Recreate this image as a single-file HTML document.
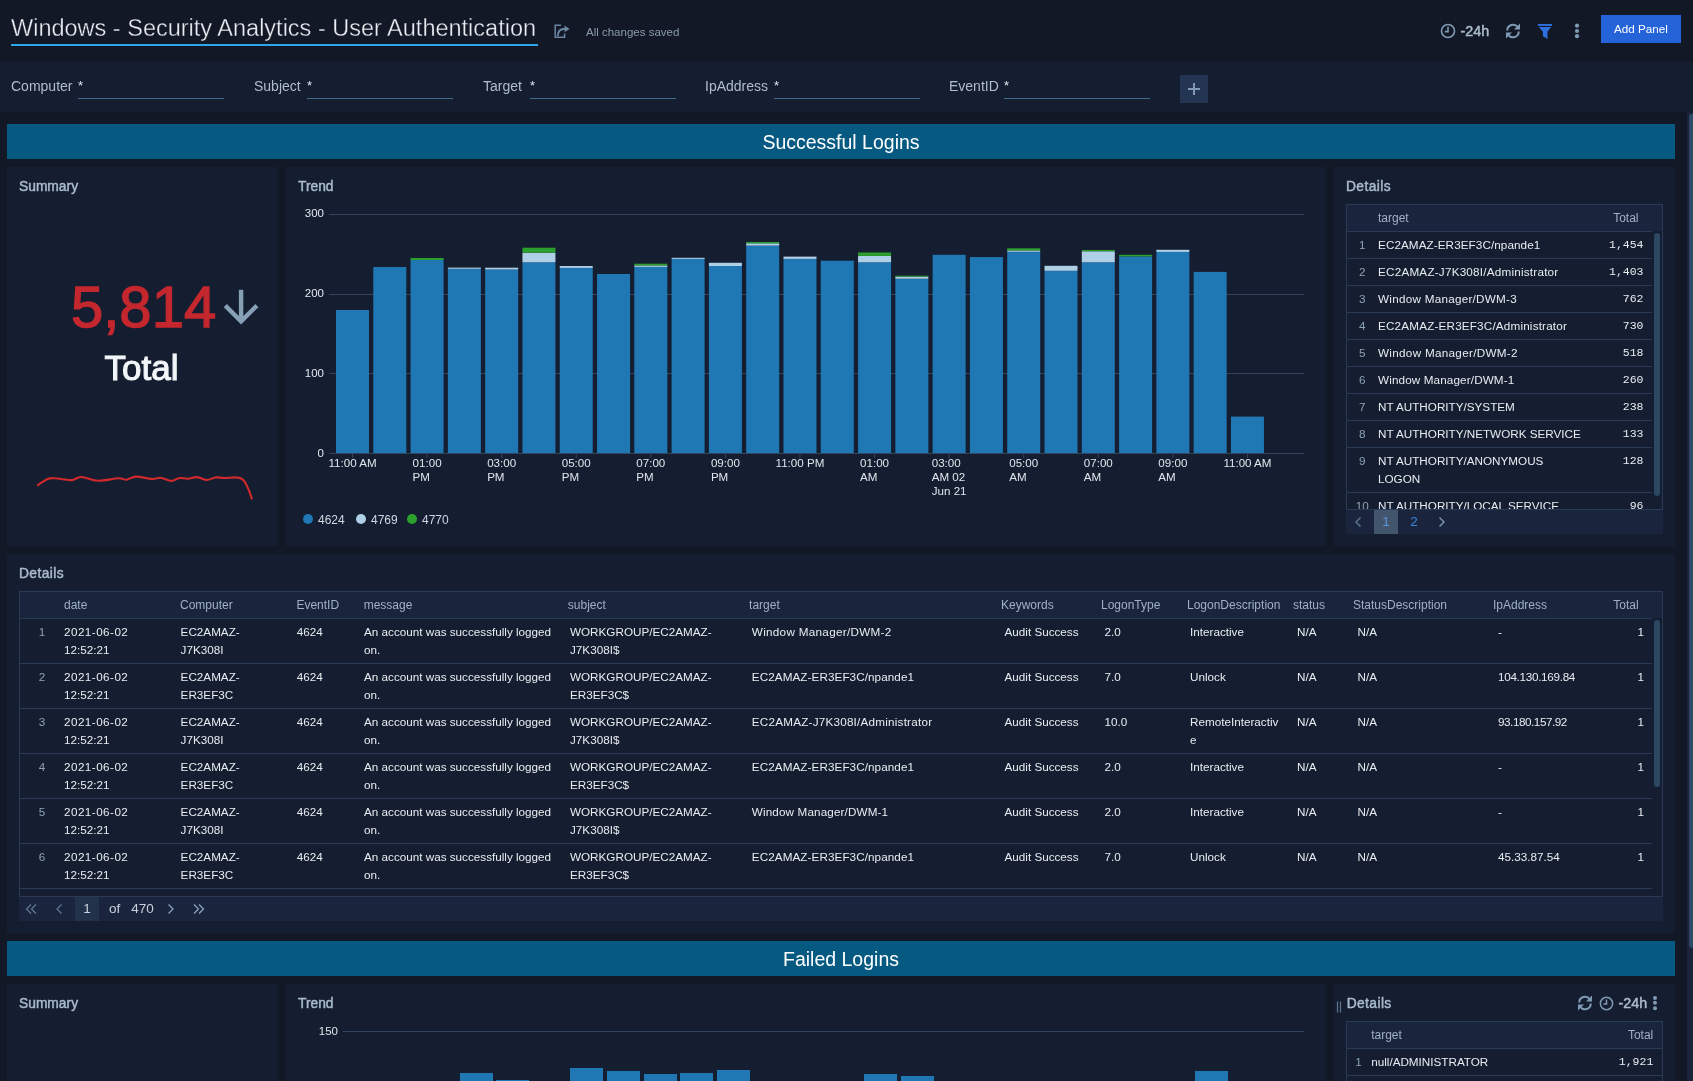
<!DOCTYPE html><html><head><meta charset="utf-8"><style>
*{box-sizing:border-box;margin:0;padding:0}
html,body{width:1693px;height:1081px;overflow:hidden;background:#121826;font-family:"Liberation Sans",sans-serif;color:#e6eaef}
.a{position:absolute;white-space:nowrap}
.p{position:absolute;background:#151e30}
.pt{position:absolute;font-size:13.3px;font-weight:700;color:#a9bccd}
.sec{position:absolute;left:7px;width:1668px;height:35px;background:#065a82;color:#fff;font-size:19.5px;text-align:center;line-height:37px}
.bd{position:absolute;background:#293a56}
.hd{position:absolute;font-size:12.3px;color:#9fb1c4;white-space:nowrap}
.c{position:absolute;font-size:11.8px;color:#e8ecf1;line-height:18px;white-space:nowrap}
.n{position:absolute;font-size:11.8px;color:#8ea3b5;white-space:nowrap}
.m{position:absolute;font-family:"Liberation Mono",monospace;font-size:12px;color:#e8ecf1;white-space:nowrap}
</style></head><body><div id="w" style="position:absolute;left:0;top:0;width:1693px;height:1081px;will-change:transform"><div class="a" style="left:11px;top:16.5px;font-size:23.5px;color:#e9edf2;font-weight:400;line-height:1;-webkit-text-stroke:0.35px #121826">Windows - Security Analytics - User Authentication</div>
<div class="a" style="left:11px;top:44px;width:527px;height:2px;background:#2ea4ea;"></div>
<svg class="a" style="left:552px;top:22px" width="20" height="18" viewBox="0 0 20 18">
  <path d="M9 3.2H3.2v12h9.4v-3.6" fill="none" stroke="#6b86a0" stroke-width="1.5"/>
  <path d="M5.8 14c0-5 2.5-7.2 7.4-7.2" fill="none" stroke="#6b86a0" stroke-width="1.9"/>
  <path d="M12.6 3.6l5 3.3-5 3.3z" fill="#6b86a0"/>
</svg>
<div class="a" style="left:586px;top:26.5px;font-size:11.5px;color:#8a9bab;font-weight:400;line-height:1;">All changes saved</div>
<svg class="a" style="left:1439px;top:22px" width="18" height="18" viewBox="0 0 18 18">
  <circle cx="9" cy="9" r="6.5" fill="none" stroke="#7f9ab2" stroke-width="1.6"/>
  <path d="M9 4.8V9.6H5.8" fill="none" stroke="#7f9ab2" stroke-width="1.6"/>
</svg>
<div class="a" style="left:1460.5px;top:24px;font-size:14.3px;color:#aabbca;font-weight:400;line-height:1;-webkit-text-stroke:0.5px #aabbca">-24h</div>
<svg class="a" style="left:1504px;top:22px" width="18" height="18" viewBox="0 0 18 18">
  <path d="M3.2 8.5a5.8 5.8 0 0 1 10.6-3.2" fill="none" stroke="#7f9ab2" stroke-width="2"/>
  <path d="M16 1.5v6h-6z" fill="#7f9ab2"/>
  <path d="M14.8 9.5a5.8 5.8 0 0 1-10.6 3.2" fill="none" stroke="#7f9ab2" stroke-width="2"/>
  <path d="M2 16.5v-6h6z" fill="#7f9ab2"/>
</svg>
<svg class="a" style="left:1537px;top:23px" width="16" height="16" viewBox="0 0 16 16">
  <rect x="0.9" y="1" width="14.2" height="1.9" fill="#2d6fdc"/>
  <path d="M1.8 4.1H14.1L10.5 8.8V15.9L5.9 13.2V8.8Z" fill="#2d6fdc"/>
</svg>
<svg class="a" style="left:1573px;top:22px" width="8" height="18" viewBox="0 0 8 18">
  <circle cx="4" cy="3.7" r="2.1" fill="#7f9ab2"/><circle cx="4" cy="9" r="2.1" fill="#7f9ab2"/><circle cx="4" cy="14.2" r="2.1" fill="#7f9ab2"/>
</svg>
<div class="a" style="left:1601px;top:15px;width:80px;height:28px;background:#2563d9;color:#fff;font-size:11.7px;text-align:center;line-height:28px">Add Panel</div>
<div class="a" style="left:0px;top:62px;width:1693px;height:50px;background:#151e30;"></div>
<div class="a" style="left:11px;top:79px;font-size:14px;color:#aebdcb;font-weight:400;line-height:1;">Computer</div>
<div class="a" style="left:78px;top:79px;font-size:13px;color:#dfe6ee;font-weight:400;line-height:1;">*</div>
<div class="a" style="left:78px;top:98px;width:146px;height:1px;background:#41698c;"></div>
<div class="a" style="left:254px;top:79px;font-size:14px;color:#aebdcb;font-weight:400;line-height:1;">Subject</div>
<div class="a" style="left:307px;top:79px;font-size:13px;color:#dfe6ee;font-weight:400;line-height:1;">*</div>
<div class="a" style="left:307px;top:98px;width:146px;height:1px;background:#41698c;"></div>
<div class="a" style="left:483px;top:79px;font-size:14px;color:#aebdcb;font-weight:400;line-height:1;">Target</div>
<div class="a" style="left:530px;top:79px;font-size:13px;color:#dfe6ee;font-weight:400;line-height:1;">*</div>
<div class="a" style="left:530px;top:98px;width:146px;height:1px;background:#41698c;"></div>
<div class="a" style="left:705px;top:79px;font-size:14px;color:#aebdcb;font-weight:400;line-height:1;">IpAddress</div>
<div class="a" style="left:774px;top:79px;font-size:13px;color:#dfe6ee;font-weight:400;line-height:1;">*</div>
<div class="a" style="left:774px;top:98px;width:146px;height:1px;background:#41698c;"></div>
<div class="a" style="left:949px;top:79px;font-size:14px;color:#aebdcb;font-weight:400;line-height:1;">EventID</div>
<div class="a" style="left:1004px;top:79px;font-size:13px;color:#dfe6ee;font-weight:400;line-height:1;">*</div>
<div class="a" style="left:1004px;top:98px;width:146px;height:1px;background:#41698c;"></div>
<div class="a" style="left:1180px;top:75px;width:28px;height:28px;background:#243553;"></div>
<svg class="a" style="left:1186px;top:81px" width="16" height="16" viewBox="0 0 16 16">
<path d="M8 2v12M2 8h12" stroke="#7f9ab2" stroke-width="2"/></svg>
<div class="a" style="left:1687px;top:112px;width:6px;height:969px;background:#1a2339;"></div>
<div class="a" style="left:1689px;top:114px;width:6px;height:834px;background:#2d4b66;border-radius:3px"></div>
<div class="sec" style="top:124px">Successful Logins</div>
<div class="a" style="left:7px;top:167px;width:271px;height:379px;background:#151e30;"></div>
<div class="a" style="left:286px;top:167px;width:1040px;height:379px;background:#151e30;"></div>
<div class="a" style="left:1334px;top:167px;width:341px;height:379px;background:#151e30;"></div>
<div class="a" style="left:19px;top:179.5px;font-size:13.8px;color:#a9bccd;font-weight:400;line-height:1;-webkit-text-stroke:0.45px #a9bccd">Summary</div>
<div class="a" style="left:298px;top:179.5px;font-size:13.8px;color:#a9bccd;font-weight:400;line-height:1;-webkit-text-stroke:0.45px #a9bccd">Trend</div>
<div class="a" style="left:1346px;top:179.5px;font-size:13.8px;color:#a9bccd;font-weight:400;line-height:1;-webkit-text-stroke:0.45px #a9bccd;letter-spacing:0.4px">Details</div>
<div class="a" style="left:71px;top:278px;font-size:58px;color:#c4272d;font-weight:400;line-height:1;-webkit-text-stroke:1.3px #c4272d">5,814</div>
<svg class="a" style="left:221px;top:287px" width="40" height="40" viewBox="0 0 40 40">
<path d="M20.1 2.8V33" stroke="#86a0b6" stroke-width="4.4" fill="none"/>
<path d="M4.3 18.6L20.1 34.4L35.9 18.6" stroke="#86a0b6" stroke-width="4.4" fill="none"/></svg>
<div class="a" style="left:104.6px;top:350px;font-size:35px;color:#f3f6f9;font-weight:400;line-height:1;-webkit-text-stroke:1.1px #f3f6f9">Total</div>
<svg class="a" style="left:0;top:0" width="300" height="560"><path d="M37.1,485.5 C38.9,484.4 44.8,480.2 47.7,479 C50.6,477.8 50.9,478.1 54.5,478.3 C58.1,478.5 66.2,479.9 69.4,480.1 C72.6,480.3 71.5,480.2 73.5,479.7 C75.5,479.2 77.5,476.8 81.6,477 C85.7,477.2 91.8,480.6 97.9,480.8 C104.0,481.0 113.5,478.5 118.3,478.3 C123.1,478.1 123.5,480.0 126.5,479.7 C129.4,479.4 131.7,476.7 136,476.6 C140.3,476.5 148.2,478.8 152.3,479 C156.4,479.2 157.2,477.4 160.4,477.7 C163.6,478.0 168.1,480.9 171.3,481 C174.5,481.1 176.7,478.4 179.4,478 C182.1,477.6 184.7,478.8 187.6,478.7 C190.5,478.6 193.9,476.9 197.1,477.1 C200.3,477.3 203.4,479.9 206.6,480 C209.8,480.1 213.1,477.7 216.1,477.4 C219.1,477.1 221.1,478.0 224.3,478 C227.5,478.0 232.4,477.3 235.1,477.4 C237.8,477.4 239.0,477.6 240.6,478.3 C242.2,479.0 243.3,479.7 244.6,481.6 C245.9,483.5 247.3,486.6 248.6,489.6 C249.8,492.6 251.5,497.8 252.1,499.4" fill="none" stroke="#d2292d" stroke-width="2.1"/></svg>
<svg class="a" style="left:0;top:0" width="1330" height="550"><rect x="329" y="214" width="975" height="1" fill="#33445f"/><rect x="329" y="294" width="975" height="1" fill="#33445f"/><rect x="329" y="373" width="975" height="1" fill="#33445f"/><rect x="329" y="453" width="975" height="1" fill="#33445f"/><rect x="336.00" y="310" width="33" height="143.00" fill="#1f77b4"/><rect x="373.29" y="267" width="33" height="186.00" fill="#1f77b4"/><rect x="410.58" y="260" width="33" height="193.00" fill="#1f77b4"/><rect x="410.58" y="258" width="33" height="2.00" fill="#2ca02c"/><rect x="447.87" y="268.8" width="33" height="184.20" fill="#1f77b4"/><rect x="447.87" y="267.6" width="33" height="1.20" fill="#aed0e6"/><rect x="485.16" y="269.5" width="33" height="183.50" fill="#1f77b4"/><rect x="485.16" y="267.7" width="33" height="1.80" fill="#aed0e6"/><rect x="522.45" y="262.3" width="33" height="190.70" fill="#1f77b4"/><rect x="522.45" y="252.7" width="33" height="9.60" fill="#aed0e6"/><rect x="522.45" y="247.7" width="33" height="5.00" fill="#2ca02c"/><rect x="559.74" y="267.9" width="33" height="185.10" fill="#1f77b4"/><rect x="559.74" y="266" width="33" height="1.90" fill="#aed0e6"/><rect x="597.03" y="274" width="33" height="179.00" fill="#1f77b4"/><rect x="634.32" y="266.9" width="33" height="186.10" fill="#1f77b4"/><rect x="634.32" y="265.4" width="33" height="1.50" fill="#aed0e6"/><rect x="634.32" y="263.7" width="33" height="1.70" fill="#2ca02c"/><rect x="671.61" y="258.9" width="33" height="194.10" fill="#1f77b4"/><rect x="671.61" y="257.8" width="33" height="1.10" fill="#aed0e6"/><rect x="708.90" y="266" width="33" height="187.00" fill="#1f77b4"/><rect x="708.90" y="262.8" width="33" height="3.20" fill="#aed0e6"/><rect x="746.19" y="245.6" width="33" height="207.40" fill="#1f77b4"/><rect x="746.19" y="243.3" width="33" height="2.30" fill="#aed0e6"/><rect x="746.19" y="242" width="33" height="1.30" fill="#2ca02c"/><rect x="783.48" y="258.9" width="33" height="194.10" fill="#1f77b4"/><rect x="783.48" y="256.6" width="33" height="2.30" fill="#aed0e6"/><rect x="820.77" y="260.7" width="33" height="192.30" fill="#1f77b4"/><rect x="858.06" y="262.3" width="33" height="190.70" fill="#1f77b4"/><rect x="858.06" y="255.9" width="33" height="6.40" fill="#aed0e6"/><rect x="858.06" y="252.5" width="33" height="3.40" fill="#2ca02c"/><rect x="895.35" y="278.7" width="33" height="174.30" fill="#1f77b4"/><rect x="895.35" y="276.6" width="33" height="2.10" fill="#aed0e6"/><rect x="895.35" y="275.7" width="33" height="0.90" fill="#2ca02c"/><rect x="932.64" y="254.8" width="33" height="198.20" fill="#1f77b4"/><rect x="969.93" y="257.1" width="33" height="195.90" fill="#1f77b4"/><rect x="1007.22" y="251.8" width="33" height="201.20" fill="#1f77b4"/><rect x="1007.22" y="250.4" width="33" height="1.40" fill="#aed0e6"/><rect x="1007.22" y="248.3" width="33" height="2.10" fill="#2ca02c"/><rect x="1044.51" y="270.8" width="33" height="182.20" fill="#1f77b4"/><rect x="1044.51" y="265.8" width="33" height="5.00" fill="#aed0e6"/><rect x="1081.80" y="262.3" width="33" height="190.70" fill="#1f77b4"/><rect x="1081.80" y="251.3" width="33" height="11.00" fill="#aed0e6"/><rect x="1081.80" y="250" width="33" height="1.30" fill="#2ca02c"/><rect x="1119.09" y="256.4" width="33" height="196.60" fill="#1f77b4"/><rect x="1119.09" y="254.8" width="33" height="1.60" fill="#2ca02c"/><rect x="1156.38" y="251.9" width="33" height="201.10" fill="#1f77b4"/><rect x="1156.38" y="249.8" width="33" height="2.10" fill="#aed0e6"/><rect x="1193.67" y="271.9" width="33" height="181.10" fill="#1f77b4"/><rect x="1230.96" y="416.6" width="33" height="36.40" fill="#1f77b4"/><rect x="352.00" y="453" width="1" height="5" fill="#33445f"/><rect x="426.58" y="453" width="1" height="5" fill="#33445f"/><rect x="501.16" y="453" width="1" height="5" fill="#33445f"/><rect x="575.74" y="453" width="1" height="5" fill="#33445f"/><rect x="650.32" y="453" width="1" height="5" fill="#33445f"/><rect x="724.90" y="453" width="1" height="5" fill="#33445f"/><rect x="799.48" y="453" width="1" height="5" fill="#33445f"/><rect x="874.06" y="453" width="1" height="5" fill="#33445f"/><rect x="948.64" y="453" width="1" height="5" fill="#33445f"/><rect x="1023.22" y="453" width="1" height="5" fill="#33445f"/><rect x="1097.80" y="453" width="1" height="5" fill="#33445f"/><rect x="1172.38" y="453" width="1" height="5" fill="#33445f"/><rect x="1246.96" y="453" width="1" height="5" fill="#33445f"/></svg>
<div class="a" style="left:224px;width:100px;text-align:right;top:206px;font-size:11.5px;line-height:14px;color:#e2e7ee">300</div>
<div class="a" style="left:224px;width:100px;text-align:right;top:286px;font-size:11.5px;line-height:14px;color:#e2e7ee">200</div>
<div class="a" style="left:224px;width:100px;text-align:right;top:365.5px;font-size:11.5px;line-height:14px;color:#e2e7ee">100</div>
<div class="a" style="left:224px;width:100px;text-align:right;top:445.5px;font-size:11.5px;line-height:14px;color:#e2e7ee">0</div>
<div class="a" style="left:292.50px;width:120px;top:456px;text-align:center;font-size:11.6px;line-height:14px;color:#dfe5ec"><span style="display:inline-block;text-align:left">11:00 AM</span></div>
<div class="a" style="left:367.08px;width:120px;top:456px;text-align:center;font-size:11.6px;line-height:14px;color:#dfe5ec"><span style="display:inline-block;text-align:left">01:00<br>PM</span></div>
<div class="a" style="left:441.66px;width:120px;top:456px;text-align:center;font-size:11.6px;line-height:14px;color:#dfe5ec"><span style="display:inline-block;text-align:left">03:00<br>PM</span></div>
<div class="a" style="left:516.24px;width:120px;top:456px;text-align:center;font-size:11.6px;line-height:14px;color:#dfe5ec"><span style="display:inline-block;text-align:left">05:00<br>PM</span></div>
<div class="a" style="left:590.82px;width:120px;top:456px;text-align:center;font-size:11.6px;line-height:14px;color:#dfe5ec"><span style="display:inline-block;text-align:left">07:00<br>PM</span></div>
<div class="a" style="left:665.40px;width:120px;top:456px;text-align:center;font-size:11.6px;line-height:14px;color:#dfe5ec"><span style="display:inline-block;text-align:left">09:00<br>PM</span></div>
<div class="a" style="left:739.98px;width:120px;top:456px;text-align:center;font-size:11.6px;line-height:14px;color:#dfe5ec"><span style="display:inline-block;text-align:left">11:00 PM</span></div>
<div class="a" style="left:814.56px;width:120px;top:456px;text-align:center;font-size:11.6px;line-height:14px;color:#dfe5ec"><span style="display:inline-block;text-align:left">01:00<br>AM</span></div>
<div class="a" style="left:889.14px;width:120px;top:456px;text-align:center;font-size:11.6px;line-height:14px;color:#dfe5ec"><span style="display:inline-block;text-align:left">03:00<br>AM 02<br>Jun 21</span></div>
<div class="a" style="left:963.72px;width:120px;top:456px;text-align:center;font-size:11.6px;line-height:14px;color:#dfe5ec"><span style="display:inline-block;text-align:left">05:00<br>AM</span></div>
<div class="a" style="left:1038.30px;width:120px;top:456px;text-align:center;font-size:11.6px;line-height:14px;color:#dfe5ec"><span style="display:inline-block;text-align:left">07:00<br>AM</span></div>
<div class="a" style="left:1112.88px;width:120px;top:456px;text-align:center;font-size:11.6px;line-height:14px;color:#dfe5ec"><span style="display:inline-block;text-align:left">09:00<br>AM</span></div>
<div class="a" style="left:1187.46px;width:120px;top:456px;text-align:center;font-size:11.6px;line-height:14px;color:#dfe5ec"><span style="display:inline-block;text-align:left">11:00 AM</span></div>
<div class="a" style="left:303px;top:514px;width:10px;height:10px;border-radius:50%;background:#1f77b4"></div>
<div class="a" style="left:318px;top:514px;font-size:12px;color:#cfd8e1;font-weight:400;line-height:1;">4624</div>
<div class="a" style="left:356px;top:514px;width:10px;height:10px;border-radius:50%;background:#aed0e6"></div>
<div class="a" style="left:371px;top:514px;font-size:12px;color:#cfd8e1;font-weight:400;line-height:1;">4769</div>
<div class="a" style="left:407px;top:514px;width:10px;height:10px;border-radius:50%;background:#2ca02c"></div>
<div class="a" style="left:422px;top:514px;font-size:12px;color:#cfd8e1;font-weight:400;line-height:1;">4770</div>
<div class="a" style="left:1346px;top:204px;width:317px;height:27px;background:#1a243c;"></div>
<div class="a" style="left:1346px;top:231px;width:306px;height:1px;background:#293a56;"></div>
<div class="a" style="left:1346px;top:204px;width:317px;height:1px;background:#293a56;"></div>
<div class="a" style="left:1346px;top:509px;width:317px;height:1px;background:#293a56;"></div>
<div class="a" style="left:1346px;top:204px;width:1px;height:306px;background:#293a56;"></div>
<div class="a" style="left:1662px;top:204px;width:1px;height:306px;background:#293a56;"></div>
<div class="a" style="left:1378px;top:212.04px;font-size:12px;line-height:13.80px;color:#9fb1c4;">target</div>
<div class="a" style="left:1338.5px;width:300px;text-align:right;top:212.04px;font-size:12px;line-height:13.80px;color:#9fb1c4;">Total</div>
<div class="a" style="left:1312.3px;width:100px;text-align:center;top:237.52px;font-size:11.7px;line-height:13.45px;color:#8ea3b5;">1</div>
<div class="a" style="left:1378px;top:237.52px;font-size:11.7px;line-height:13.45px;color:#e8ecf1;letter-spacing:0.08px;">EC2AMAZ-ER3EF3C/npande1</div>
<div class="a" style="left:1343.5px;width:300px;text-align:right;top:237.71px;font-size:11.5px;line-height:13.22px;color:#e8ecf1;font-family:'Liberation Mono',monospace;margin-top:0.2px">1,454</div>
<div class="a" style="left:1347px;top:258px;width:305px;height:1px;background:#293a56;"></div>
<div class="a" style="left:1312.3px;width:100px;text-align:center;top:264.52px;font-size:11.7px;line-height:13.45px;color:#8ea3b5;">2</div>
<div class="a" style="left:1378px;top:264.52px;font-size:11.7px;line-height:13.45px;color:#e8ecf1;letter-spacing:0.22px;">EC2AMAZ-J7K308I/Administrator</div>
<div class="a" style="left:1343.5px;width:300px;text-align:right;top:264.70px;font-size:11.5px;line-height:13.22px;color:#e8ecf1;font-family:'Liberation Mono',monospace;margin-top:0.2px">1,403</div>
<div class="a" style="left:1347px;top:285px;width:305px;height:1px;background:#293a56;"></div>
<div class="a" style="left:1312.3px;width:100px;text-align:center;top:291.52px;font-size:11.7px;line-height:13.45px;color:#8ea3b5;">3</div>
<div class="a" style="left:1378px;top:291.52px;font-size:11.7px;line-height:13.45px;color:#e8ecf1;letter-spacing:0.26px;">Window Manager/DWM-3</div>
<div class="a" style="left:1343.5px;width:300px;text-align:right;top:291.70px;font-size:11.5px;line-height:13.22px;color:#e8ecf1;font-family:'Liberation Mono',monospace;margin-top:0.2px">762</div>
<div class="a" style="left:1347px;top:312px;width:305px;height:1px;background:#293a56;"></div>
<div class="a" style="left:1312.3px;width:100px;text-align:center;top:318.52px;font-size:11.7px;line-height:13.45px;color:#8ea3b5;">4</div>
<div class="a" style="left:1378px;top:318.52px;font-size:11.7px;line-height:13.45px;color:#e8ecf1;letter-spacing:0.18px;">EC2AMAZ-ER3EF3C/Administrator</div>
<div class="a" style="left:1343.5px;width:300px;text-align:right;top:318.70px;font-size:11.5px;line-height:13.22px;color:#e8ecf1;font-family:'Liberation Mono',monospace;margin-top:0.2px">730</div>
<div class="a" style="left:1347px;top:339px;width:305px;height:1px;background:#293a56;"></div>
<div class="a" style="left:1312.3px;width:100px;text-align:center;top:345.52px;font-size:11.7px;line-height:13.45px;color:#8ea3b5;">5</div>
<div class="a" style="left:1378px;top:345.52px;font-size:11.7px;line-height:13.45px;color:#e8ecf1;letter-spacing:0.3px;">Window Manager/DWM-2</div>
<div class="a" style="left:1343.5px;width:300px;text-align:right;top:345.70px;font-size:11.5px;line-height:13.22px;color:#e8ecf1;font-family:'Liberation Mono',monospace;margin-top:0.2px">518</div>
<div class="a" style="left:1347px;top:366px;width:305px;height:1px;background:#293a56;"></div>
<div class="a" style="left:1312.3px;width:100px;text-align:center;top:372.52px;font-size:11.7px;line-height:13.45px;color:#8ea3b5;">6</div>
<div class="a" style="left:1378px;top:372.52px;font-size:11.7px;line-height:13.45px;color:#e8ecf1;letter-spacing:0.13px;">Window Manager/DWM-1</div>
<div class="a" style="left:1343.5px;width:300px;text-align:right;top:372.70px;font-size:11.5px;line-height:13.22px;color:#e8ecf1;font-family:'Liberation Mono',monospace;margin-top:0.2px">260</div>
<div class="a" style="left:1347px;top:393px;width:305px;height:1px;background:#293a56;"></div>
<div class="a" style="left:1312.3px;width:100px;text-align:center;top:399.52px;font-size:11.7px;line-height:13.45px;color:#8ea3b5;">7</div>
<div class="a" style="left:1378px;top:399.52px;font-size:11.7px;line-height:13.45px;color:#e8ecf1;">NT AUTHORITY/SYSTEM</div>
<div class="a" style="left:1343.5px;width:300px;text-align:right;top:399.70px;font-size:11.5px;line-height:13.22px;color:#e8ecf1;font-family:'Liberation Mono',monospace;margin-top:0.2px">238</div>
<div class="a" style="left:1347px;top:420px;width:305px;height:1px;background:#293a56;"></div>
<div class="a" style="left:1312.3px;width:100px;text-align:center;top:426.52px;font-size:11.7px;line-height:13.45px;color:#8ea3b5;">8</div>
<div class="a" style="left:1378px;top:426.52px;font-size:11.7px;line-height:13.45px;color:#e8ecf1;">NT AUTHORITY/NETWORK SERVICE</div>
<div class="a" style="left:1343.5px;width:300px;text-align:right;top:426.70px;font-size:11.5px;line-height:13.22px;color:#e8ecf1;font-family:'Liberation Mono',monospace;margin-top:0.2px">133</div>
<div class="a" style="left:1347px;top:447px;width:305px;height:1px;background:#293a56;"></div>
<div class="a" style="left:1312.3px;width:100px;text-align:center;top:453.92px;font-size:11.7px;line-height:13.45px;color:#8ea3b5;">9</div>
<div class="a" style="left:1378px;top:453.92px;font-size:11.7px;line-height:13.45px;color:#e8ecf1;">NT AUTHORITY/ANONYMOUS</div>
<div class="a" style="left:1378px;top:471.52px;font-size:11.7px;line-height:13.45px;color:#e8ecf1;">LOGON</div>
<div class="a" style="left:1343.5px;width:300px;text-align:right;top:454.11px;font-size:11.5px;line-height:13.22px;color:#e8ecf1;font-family:'Liberation Mono',monospace;margin-top:0.2px">128</div>
<div class="a" style="left:1347px;top:492px;width:305px;height:1px;background:#293a56;"></div>
<div class="a" style="left:1347px;top:493px;width:305px;height:16px;overflow:hidden">
<div style="position:relative;left:-1347px;top:-493px">
<div class="a" style="left:1312.3px;width:100px;text-align:center;top:499.12px;font-size:11.7px;line-height:13.45px;color:#8ea3b5;">10</div>
<div class="a" style="left:1378px;top:499.12px;font-size:11.7px;line-height:13.45px;color:#e8ecf1;">NT AUTHORITY/LOCAL SERVICE</div>
<div class="a" style="left:1343.5px;width:300px;text-align:right;top:499.31px;font-size:11.5px;line-height:13.22px;color:#e8ecf1;font-family:'Liberation Mono',monospace;margin-top:0.2px">96</div>
</div></div>
<div class="a" style="left:1654px;top:233px;width:6px;height:263px;background:#2c4863;border-radius:3px"></div>
<div class="a" style="left:1346px;top:510px;width:317px;height:24px;background:#1a243c;"></div>
<svg class="a" style="left:1353px;top:515px" width="10" height="14" viewBox="0 0 10 14"><path d="M7.5 2.5L3 7l4.5 4.5" fill="none" stroke="#5f7790" stroke-width="1.4"/></svg>
<div class="a" style="left:1374px;top:510px;width:24px;height:24px;background:#43546d;"></div>
<div class="a" style="left:1336px;width:100px;text-align:center;top:514.45px;font-size:13.5px;line-height:15.52px;color:#5b95da;">1</div>
<div class="a" style="left:1364px;width:100px;text-align:center;top:514.45px;font-size:13.5px;line-height:15.52px;color:#3b86dd;">2</div>
<svg class="a" style="left:1437px;top:515px" width="10" height="14" viewBox="0 0 10 14"><path d="M2.5 2.5L7 7l-4.5 4.5" fill="none" stroke="#7f9ab3" stroke-width="1.4"/></svg>
<div class="a" style="left:7px;top:554px;width:1668px;height:379px;background:#151e30;"></div>
<div class="a" style="left:19px;top:566.5px;font-size:13.8px;color:#a9bccd;font-weight:400;line-height:1;-webkit-text-stroke:0.45px #a9bccd;letter-spacing:0.4px">Details</div>
<div class="a" style="left:19px;top:591px;width:1644px;height:27px;background:#1a243c;"></div>
<div class="a" style="left:19px;top:618px;width:1633px;height:1px;background:#293a56;"></div>
<div class="a" style="left:19px;top:591px;width:1644px;height:1px;background:#293a56;"></div>
<div class="a" style="left:19px;top:896px;width:1644px;height:1px;background:#293a56;"></div>
<div class="a" style="left:19px;top:591px;width:1px;height:306px;background:#293a56;"></div>
<div class="a" style="left:1662px;top:591px;width:1px;height:306px;background:#293a56;"></div>
<div class="a" style="left:64px;top:599.44px;font-size:12px;line-height:13.80px;color:#9fb1c4;">date</div>
<div class="a" style="left:180px;top:599.44px;font-size:12px;line-height:13.80px;color:#9fb1c4;">Computer</div>
<div class="a" style="left:296.4px;top:599.44px;font-size:12px;line-height:13.80px;color:#9fb1c4;">EventID</div>
<div class="a" style="left:363.7px;top:599.44px;font-size:12px;line-height:13.80px;color:#9fb1c4;">message</div>
<div class="a" style="left:567.8px;top:599.44px;font-size:12px;line-height:13.80px;color:#9fb1c4;">subject</div>
<div class="a" style="left:749.1px;top:599.44px;font-size:12px;line-height:13.80px;color:#9fb1c4;">target</div>
<div class="a" style="left:1001px;top:599.44px;font-size:12px;line-height:13.80px;color:#9fb1c4;">Keywords</div>
<div class="a" style="left:1101px;top:599.44px;font-size:12px;line-height:13.80px;color:#9fb1c4;">LogonType</div>
<div class="a" style="left:1187px;top:599.44px;font-size:12px;line-height:13.80px;color:#9fb1c4;">LogonDescription</div>
<div class="a" style="left:1293px;top:599.44px;font-size:12px;line-height:13.80px;color:#9fb1c4;">status</div>
<div class="a" style="left:1353px;top:599.44px;font-size:12px;line-height:13.80px;color:#9fb1c4;">StatusDescription</div>
<div class="a" style="left:1493px;top:599.44px;font-size:12px;line-height:13.80px;color:#9fb1c4;">IpAddress</div>
<div class="a" style="left:1338.6px;width:300px;text-align:right;top:599.44px;font-size:12px;line-height:13.80px;color:#9fb1c4;">Total</div>
<div class="a" style="left:-8px;width:100px;text-align:center;top:624.82px;font-size:11.7px;line-height:13.45px;color:#8ea3b5;">1</div>
<div class="a" style="left:64px;top:624.82px;font-size:11.7px;line-height:13.45px;color:#e8ecf1;letter-spacing:0.45px;">2021-06-02</div>
<div class="a" style="left:64px;top:642.52px;font-size:11.7px;line-height:13.45px;color:#e8ecf1;">12:52:21</div>
<div class="a" style="left:180.6px;top:624.82px;font-size:11.7px;line-height:13.45px;color:#e8ecf1;">EC2AMAZ-</div>
<div class="a" style="left:180.6px;top:642.52px;font-size:11.7px;line-height:13.45px;color:#e8ecf1;">J7K308I</div>
<div class="a" style="left:296.8px;top:624.82px;font-size:11.7px;line-height:13.45px;color:#e8ecf1;">4624</div>
<div class="a" style="left:364px;top:624.82px;font-size:11.7px;line-height:13.45px;color:#e8ecf1;">An account was successfully logged</div>
<div class="a" style="left:364px;top:642.52px;font-size:11.7px;line-height:13.45px;color:#e8ecf1;">on.</div>
<div class="a" style="left:570px;top:624.82px;font-size:11.7px;line-height:13.45px;color:#e8ecf1;">WORKGROUP/EC2AMAZ-</div>
<div class="a" style="left:570px;top:642.52px;font-size:11.7px;line-height:13.45px;color:#e8ecf1;">J7K308I$</div>
<div class="a" style="left:751.8px;top:624.82px;font-size:11.7px;line-height:13.45px;color:#e8ecf1;letter-spacing:0.3px;">Window Manager/DWM-2</div>
<div class="a" style="left:1004.5px;top:624.82px;font-size:11.7px;line-height:13.45px;color:#e8ecf1;">Audit Success</div>
<div class="a" style="left:1104.5px;top:624.82px;font-size:11.7px;line-height:13.45px;color:#e8ecf1;">2.0</div>
<div class="a" style="left:1190px;top:624.82px;font-size:11.7px;line-height:13.45px;color:#e8ecf1;">Interactive</div>
<div class="a" style="left:1297px;top:624.82px;font-size:11.7px;line-height:13.45px;color:#e8ecf1;">N/A</div>
<div class="a" style="left:1357.5px;top:624.82px;font-size:11.7px;line-height:13.45px;color:#e8ecf1;">N/A</div>
<div class="a" style="left:1498px;top:624.82px;font-size:11.7px;line-height:13.45px;color:#e8ecf1;">-</div>
<div class="a" style="left:1344px;width:300px;text-align:right;top:624.82px;font-size:11.7px;line-height:13.45px;color:#e8ecf1;">1</div>
<div class="a" style="left:20px;top:663px;width:1632px;height:1px;background:#293a56;"></div>
<div class="a" style="left:-8px;width:100px;text-align:center;top:669.82px;font-size:11.7px;line-height:13.45px;color:#8ea3b5;">2</div>
<div class="a" style="left:64px;top:669.82px;font-size:11.7px;line-height:13.45px;color:#e8ecf1;letter-spacing:0.45px;">2021-06-02</div>
<div class="a" style="left:64px;top:687.52px;font-size:11.7px;line-height:13.45px;color:#e8ecf1;">12:52:21</div>
<div class="a" style="left:180.6px;top:669.82px;font-size:11.7px;line-height:13.45px;color:#e8ecf1;">EC2AMAZ-</div>
<div class="a" style="left:180.6px;top:687.52px;font-size:11.7px;line-height:13.45px;color:#e8ecf1;">ER3EF3C</div>
<div class="a" style="left:296.8px;top:669.82px;font-size:11.7px;line-height:13.45px;color:#e8ecf1;">4624</div>
<div class="a" style="left:364px;top:669.82px;font-size:11.7px;line-height:13.45px;color:#e8ecf1;">An account was successfully logged</div>
<div class="a" style="left:364px;top:687.52px;font-size:11.7px;line-height:13.45px;color:#e8ecf1;">on.</div>
<div class="a" style="left:570px;top:669.82px;font-size:11.7px;line-height:13.45px;color:#e8ecf1;">WORKGROUP/EC2AMAZ-</div>
<div class="a" style="left:570px;top:687.52px;font-size:11.7px;line-height:13.45px;color:#e8ecf1;">ER3EF3C$</div>
<div class="a" style="left:751.8px;top:669.82px;font-size:11.7px;line-height:13.45px;color:#e8ecf1;letter-spacing:0.08px;">EC2AMAZ-ER3EF3C/npande1</div>
<div class="a" style="left:1004.5px;top:669.82px;font-size:11.7px;line-height:13.45px;color:#e8ecf1;">Audit Success</div>
<div class="a" style="left:1104.5px;top:669.82px;font-size:11.7px;line-height:13.45px;color:#e8ecf1;">7.0</div>
<div class="a" style="left:1190px;top:669.82px;font-size:11.7px;line-height:13.45px;color:#e8ecf1;">Unlock</div>
<div class="a" style="left:1297px;top:669.82px;font-size:11.7px;line-height:13.45px;color:#e8ecf1;">N/A</div>
<div class="a" style="left:1357.5px;top:669.82px;font-size:11.7px;line-height:13.45px;color:#e8ecf1;">N/A</div>
<div class="a" style="left:1498px;top:669.82px;font-size:11.7px;line-height:13.45px;color:#e8ecf1;letter-spacing:-0.3px;">104.130.169.84</div>
<div class="a" style="left:1344px;width:300px;text-align:right;top:669.82px;font-size:11.7px;line-height:13.45px;color:#e8ecf1;">1</div>
<div class="a" style="left:20px;top:708px;width:1632px;height:1px;background:#293a56;"></div>
<div class="a" style="left:-8px;width:100px;text-align:center;top:714.82px;font-size:11.7px;line-height:13.45px;color:#8ea3b5;">3</div>
<div class="a" style="left:64px;top:714.82px;font-size:11.7px;line-height:13.45px;color:#e8ecf1;letter-spacing:0.45px;">2021-06-02</div>
<div class="a" style="left:64px;top:732.52px;font-size:11.7px;line-height:13.45px;color:#e8ecf1;">12:52:21</div>
<div class="a" style="left:180.6px;top:714.82px;font-size:11.7px;line-height:13.45px;color:#e8ecf1;">EC2AMAZ-</div>
<div class="a" style="left:180.6px;top:732.52px;font-size:11.7px;line-height:13.45px;color:#e8ecf1;">J7K308I</div>
<div class="a" style="left:296.8px;top:714.82px;font-size:11.7px;line-height:13.45px;color:#e8ecf1;">4624</div>
<div class="a" style="left:364px;top:714.82px;font-size:11.7px;line-height:13.45px;color:#e8ecf1;">An account was successfully logged</div>
<div class="a" style="left:364px;top:732.52px;font-size:11.7px;line-height:13.45px;color:#e8ecf1;">on.</div>
<div class="a" style="left:570px;top:714.82px;font-size:11.7px;line-height:13.45px;color:#e8ecf1;">WORKGROUP/EC2AMAZ-</div>
<div class="a" style="left:570px;top:732.52px;font-size:11.7px;line-height:13.45px;color:#e8ecf1;">J7K308I$</div>
<div class="a" style="left:751.8px;top:714.82px;font-size:11.7px;line-height:13.45px;color:#e8ecf1;letter-spacing:0.22px;">EC2AMAZ-J7K308I/Administrator</div>
<div class="a" style="left:1004.5px;top:714.82px;font-size:11.7px;line-height:13.45px;color:#e8ecf1;">Audit Success</div>
<div class="a" style="left:1104.5px;top:714.82px;font-size:11.7px;line-height:13.45px;color:#e8ecf1;">10.0</div>
<div class="a" style="left:1190px;top:714.82px;font-size:11.7px;line-height:13.45px;color:#e8ecf1;">RemoteInteractiv</div>
<div class="a" style="left:1190px;top:732.52px;font-size:11.7px;line-height:13.45px;color:#e8ecf1;">e</div>
<div class="a" style="left:1297px;top:714.82px;font-size:11.7px;line-height:13.45px;color:#e8ecf1;">N/A</div>
<div class="a" style="left:1357.5px;top:714.82px;font-size:11.7px;line-height:13.45px;color:#e8ecf1;">N/A</div>
<div class="a" style="left:1498px;top:714.82px;font-size:11.7px;line-height:13.45px;color:#e8ecf1;letter-spacing:-0.45px;">93.180.157.92</div>
<div class="a" style="left:1344px;width:300px;text-align:right;top:714.82px;font-size:11.7px;line-height:13.45px;color:#e8ecf1;">1</div>
<div class="a" style="left:20px;top:753px;width:1632px;height:1px;background:#293a56;"></div>
<div class="a" style="left:-8px;width:100px;text-align:center;top:759.82px;font-size:11.7px;line-height:13.45px;color:#8ea3b5;">4</div>
<div class="a" style="left:64px;top:759.82px;font-size:11.7px;line-height:13.45px;color:#e8ecf1;letter-spacing:0.45px;">2021-06-02</div>
<div class="a" style="left:64px;top:777.52px;font-size:11.7px;line-height:13.45px;color:#e8ecf1;">12:52:21</div>
<div class="a" style="left:180.6px;top:759.82px;font-size:11.7px;line-height:13.45px;color:#e8ecf1;">EC2AMAZ-</div>
<div class="a" style="left:180.6px;top:777.52px;font-size:11.7px;line-height:13.45px;color:#e8ecf1;">ER3EF3C</div>
<div class="a" style="left:296.8px;top:759.82px;font-size:11.7px;line-height:13.45px;color:#e8ecf1;">4624</div>
<div class="a" style="left:364px;top:759.82px;font-size:11.7px;line-height:13.45px;color:#e8ecf1;">An account was successfully logged</div>
<div class="a" style="left:364px;top:777.52px;font-size:11.7px;line-height:13.45px;color:#e8ecf1;">on.</div>
<div class="a" style="left:570px;top:759.82px;font-size:11.7px;line-height:13.45px;color:#e8ecf1;">WORKGROUP/EC2AMAZ-</div>
<div class="a" style="left:570px;top:777.52px;font-size:11.7px;line-height:13.45px;color:#e8ecf1;">ER3EF3C$</div>
<div class="a" style="left:751.8px;top:759.82px;font-size:11.7px;line-height:13.45px;color:#e8ecf1;letter-spacing:0.08px;">EC2AMAZ-ER3EF3C/npande1</div>
<div class="a" style="left:1004.5px;top:759.82px;font-size:11.7px;line-height:13.45px;color:#e8ecf1;">Audit Success</div>
<div class="a" style="left:1104.5px;top:759.82px;font-size:11.7px;line-height:13.45px;color:#e8ecf1;">2.0</div>
<div class="a" style="left:1190px;top:759.82px;font-size:11.7px;line-height:13.45px;color:#e8ecf1;">Interactive</div>
<div class="a" style="left:1297px;top:759.82px;font-size:11.7px;line-height:13.45px;color:#e8ecf1;">N/A</div>
<div class="a" style="left:1357.5px;top:759.82px;font-size:11.7px;line-height:13.45px;color:#e8ecf1;">N/A</div>
<div class="a" style="left:1498px;top:759.82px;font-size:11.7px;line-height:13.45px;color:#e8ecf1;">-</div>
<div class="a" style="left:1344px;width:300px;text-align:right;top:759.82px;font-size:11.7px;line-height:13.45px;color:#e8ecf1;">1</div>
<div class="a" style="left:20px;top:798px;width:1632px;height:1px;background:#293a56;"></div>
<div class="a" style="left:-8px;width:100px;text-align:center;top:804.82px;font-size:11.7px;line-height:13.45px;color:#8ea3b5;">5</div>
<div class="a" style="left:64px;top:804.82px;font-size:11.7px;line-height:13.45px;color:#e8ecf1;letter-spacing:0.45px;">2021-06-02</div>
<div class="a" style="left:64px;top:822.52px;font-size:11.7px;line-height:13.45px;color:#e8ecf1;">12:52:21</div>
<div class="a" style="left:180.6px;top:804.82px;font-size:11.7px;line-height:13.45px;color:#e8ecf1;">EC2AMAZ-</div>
<div class="a" style="left:180.6px;top:822.52px;font-size:11.7px;line-height:13.45px;color:#e8ecf1;">J7K308I</div>
<div class="a" style="left:296.8px;top:804.82px;font-size:11.7px;line-height:13.45px;color:#e8ecf1;">4624</div>
<div class="a" style="left:364px;top:804.82px;font-size:11.7px;line-height:13.45px;color:#e8ecf1;">An account was successfully logged</div>
<div class="a" style="left:364px;top:822.52px;font-size:11.7px;line-height:13.45px;color:#e8ecf1;">on.</div>
<div class="a" style="left:570px;top:804.82px;font-size:11.7px;line-height:13.45px;color:#e8ecf1;">WORKGROUP/EC2AMAZ-</div>
<div class="a" style="left:570px;top:822.52px;font-size:11.7px;line-height:13.45px;color:#e8ecf1;">J7K308I$</div>
<div class="a" style="left:751.8px;top:804.82px;font-size:11.7px;line-height:13.45px;color:#e8ecf1;letter-spacing:0.13px;">Window Manager/DWM-1</div>
<div class="a" style="left:1004.5px;top:804.82px;font-size:11.7px;line-height:13.45px;color:#e8ecf1;">Audit Success</div>
<div class="a" style="left:1104.5px;top:804.82px;font-size:11.7px;line-height:13.45px;color:#e8ecf1;">2.0</div>
<div class="a" style="left:1190px;top:804.82px;font-size:11.7px;line-height:13.45px;color:#e8ecf1;">Interactive</div>
<div class="a" style="left:1297px;top:804.82px;font-size:11.7px;line-height:13.45px;color:#e8ecf1;">N/A</div>
<div class="a" style="left:1357.5px;top:804.82px;font-size:11.7px;line-height:13.45px;color:#e8ecf1;">N/A</div>
<div class="a" style="left:1498px;top:804.82px;font-size:11.7px;line-height:13.45px;color:#e8ecf1;">-</div>
<div class="a" style="left:1344px;width:300px;text-align:right;top:804.82px;font-size:11.7px;line-height:13.45px;color:#e8ecf1;">1</div>
<div class="a" style="left:20px;top:843px;width:1632px;height:1px;background:#293a56;"></div>
<div class="a" style="left:-8px;width:100px;text-align:center;top:849.82px;font-size:11.7px;line-height:13.45px;color:#8ea3b5;">6</div>
<div class="a" style="left:64px;top:849.82px;font-size:11.7px;line-height:13.45px;color:#e8ecf1;letter-spacing:0.45px;">2021-06-02</div>
<div class="a" style="left:64px;top:867.52px;font-size:11.7px;line-height:13.45px;color:#e8ecf1;">12:52:21</div>
<div class="a" style="left:180.6px;top:849.82px;font-size:11.7px;line-height:13.45px;color:#e8ecf1;">EC2AMAZ-</div>
<div class="a" style="left:180.6px;top:867.52px;font-size:11.7px;line-height:13.45px;color:#e8ecf1;">ER3EF3C</div>
<div class="a" style="left:296.8px;top:849.82px;font-size:11.7px;line-height:13.45px;color:#e8ecf1;">4624</div>
<div class="a" style="left:364px;top:849.82px;font-size:11.7px;line-height:13.45px;color:#e8ecf1;">An account was successfully logged</div>
<div class="a" style="left:364px;top:867.52px;font-size:11.7px;line-height:13.45px;color:#e8ecf1;">on.</div>
<div class="a" style="left:570px;top:849.82px;font-size:11.7px;line-height:13.45px;color:#e8ecf1;">WORKGROUP/EC2AMAZ-</div>
<div class="a" style="left:570px;top:867.52px;font-size:11.7px;line-height:13.45px;color:#e8ecf1;">ER3EF3C$</div>
<div class="a" style="left:751.8px;top:849.82px;font-size:11.7px;line-height:13.45px;color:#e8ecf1;letter-spacing:0.08px;">EC2AMAZ-ER3EF3C/npande1</div>
<div class="a" style="left:1004.5px;top:849.82px;font-size:11.7px;line-height:13.45px;color:#e8ecf1;">Audit Success</div>
<div class="a" style="left:1104.5px;top:849.82px;font-size:11.7px;line-height:13.45px;color:#e8ecf1;">7.0</div>
<div class="a" style="left:1190px;top:849.82px;font-size:11.7px;line-height:13.45px;color:#e8ecf1;">Unlock</div>
<div class="a" style="left:1297px;top:849.82px;font-size:11.7px;line-height:13.45px;color:#e8ecf1;">N/A</div>
<div class="a" style="left:1357.5px;top:849.82px;font-size:11.7px;line-height:13.45px;color:#e8ecf1;">N/A</div>
<div class="a" style="left:1498px;top:849.82px;font-size:11.7px;line-height:13.45px;color:#e8ecf1;">45.33.87.54</div>
<div class="a" style="left:1344px;width:300px;text-align:right;top:849.82px;font-size:11.7px;line-height:13.45px;color:#e8ecf1;">1</div>
<div class="a" style="left:20px;top:888px;width:1632px;height:1px;background:#293a56;"></div>
<div class="a" style="left:1654px;top:620px;width:6px;height:167px;background:#2c4863;border-radius:3px"></div>
<div class="a" style="left:19px;top:897px;width:1644px;height:24px;background:#1a243c;"></div>
<div class="a" style="left:75px;top:897px;width:24px;height:24px;background:#23324b;"></div>
<svg class="a" style="left:24px;top:902px" width="14" height="14" viewBox="0 0 14 14"><path d="M7 2.5L2.5 7 7 11.5M12 2.5L7.5 7l4.5 4.5" fill="none" stroke="#5f7790" stroke-width="1.3"/></svg>
<svg class="a" style="left:54px;top:902px" width="10" height="14" viewBox="0 0 10 14"><path d="M7.5 2.5L3 7l4.5 4.5" fill="none" stroke="#5f7790" stroke-width="1.3"/></svg>
<div class="a" style="left:37px;width:100px;text-align:center;top:900.55px;font-size:13.5px;line-height:15.52px;color:#c9d3de;">1</div>
<div class="a" style="left:109px;top:900.55px;font-size:13.5px;line-height:15.52px;color:#c9d3de;">of</div>
<div class="a" style="left:131.3px;top:900.55px;font-size:13.5px;line-height:15.52px;color:#c9d3de;">470</div>
<svg class="a" style="left:166px;top:902px" width="10" height="14" viewBox="0 0 10 14"><path d="M2.5 2.5L7 7l-4.5 4.5" fill="none" stroke="#8aa3ba" stroke-width="1.3"/></svg>
<svg class="a" style="left:192px;top:902px" width="14" height="14" viewBox="0 0 14 14"><path d="M2 2.5L6.5 7 2 11.5M7 2.5L11.5 7 7 11.5" fill="none" stroke="#8aa3ba" stroke-width="1.3"/></svg>
<div class="sec" style="top:941px">Failed Logins</div>
<div class="a" style="left:7px;top:984px;width:271px;height:97px;background:#151e30;"></div>
<div class="a" style="left:286px;top:984px;width:1040px;height:97px;background:#151e30;"></div>
<div class="a" style="left:1334px;top:984px;width:341px;height:97px;background:#151e30;"></div>
<div class="a" style="left:19px;top:996.5px;font-size:13.8px;color:#a9bccd;font-weight:400;line-height:1;-webkit-text-stroke:0.45px #a9bccd">Summary</div>
<div class="a" style="left:298px;top:996.5px;font-size:13.8px;color:#a9bccd;font-weight:400;line-height:1;-webkit-text-stroke:0.45px #a9bccd">Trend</div>
<div class="a" style="left:1346.7px;top:996.5px;font-size:13.8px;color:#a9bccd;font-weight:400;line-height:1;-webkit-text-stroke:0.45px #a9bccd;letter-spacing:0.4px">Details</div>
<div class="a" style="left:343px;top:1031px;width:961px;height:1px;background:#33445f;"></div>
<div class="a" style="left:238px;width:100px;text-align:right;top:1024px;font-size:11.5px;line-height:14px;color:#dfe5ec">150</div>
<div class="a" style="left:459.8px;top:1072.6px;width:33px;height:8.400000000000091px;background:#1f77b4;"></div>
<div class="a" style="left:496.1px;top:1079.7px;width:33px;height:1.2999999999999545px;background:#1f77b4;"></div>
<div class="a" style="left:570px;top:1067.9px;width:33px;height:13.099999999999909px;background:#1f77b4;"></div>
<div class="a" style="left:606.9px;top:1070.8px;width:33px;height:10.200000000000045px;background:#1f77b4;"></div>
<div class="a" style="left:643.8px;top:1073.8px;width:33px;height:7.2000000000000455px;background:#1f77b4;"></div>
<div class="a" style="left:679.8px;top:1072.6px;width:33px;height:8.400000000000091px;background:#1f77b4;"></div>
<div class="a" style="left:717px;top:1069.7px;width:33px;height:11.299999999999955px;background:#1f77b4;"></div>
<div class="a" style="left:863.8px;top:1074.3px;width:33px;height:6.7000000000000455px;background:#1f77b4;"></div>
<div class="a" style="left:901.2px;top:1076px;width:33px;height:5px;background:#1f77b4;"></div>
<div class="a" style="left:1195.2px;top:1071px;width:33px;height:10px;background:#1f77b4;"></div>
<svg class="a" style="left:1336px;top:1000px" width="7" height="13" viewBox="0 0 7 13"><path d="M1.5 1.5v11M4.5 1.5v11" stroke="#5d7792" stroke-width="1.2"/></svg>
<svg class="a" style="left:1575.5px;top:994px" width="18" height="18" viewBox="0 0 18 18">
  <path d="M3.2 8.5a5.8 5.8 0 0 1 10.6-3.2" fill="none" stroke="#7f9ab2" stroke-width="2"/>
  <path d="M16 1.5v6h-6z" fill="#7f9ab2"/>
  <path d="M14.8 9.5a5.8 5.8 0 0 1-10.6 3.2" fill="none" stroke="#7f9ab2" stroke-width="2"/>
  <path d="M2 16.5v-6h6z" fill="#7f9ab2"/></svg>
<svg class="a" style="left:1598px;top:995px" width="17" height="17" viewBox="0 0 18 18">
  <circle cx="9" cy="9" r="6.5" fill="none" stroke="#7f9ab2" stroke-width="1.6"/>
  <path d="M9 4.8V9.6H5.8" fill="none" stroke="#7f9ab2" stroke-width="1.6"/></svg>
<div class="a" style="left:1618.5px;top:996.3px;font-size:14.3px;color:#aabbca;font-weight:400;line-height:1;-webkit-text-stroke:0.5px #aabbca">-24h</div>
<svg class="a" style="left:1651px;top:995px" width="8" height="16" viewBox="0 0 8 16">
  <circle cx="4" cy="3" r="2" fill="#7f9ab2"/><circle cx="4" cy="7.7" r="2" fill="#7f9ab2"/><circle cx="4" cy="13.2" r="2" fill="#7f9ab2"/></svg>
<div class="a" style="left:1346px;top:1021px;width:317px;height:27px;background:#1a243c;"></div>
<div class="a" style="left:1346px;top:1048px;width:317px;height:1px;background:#293a56;"></div>
<div class="a" style="left:1346px;top:1021px;width:317px;height:1px;background:#293a56;"></div>
<div class="a" style="left:1346px;top:1021px;width:1px;height:60px;background:#293a56;"></div>
<div class="a" style="left:1662px;top:1021px;width:1px;height:60px;background:#293a56;"></div>
<div class="a" style="left:1371.2px;top:1029.04px;font-size:12px;line-height:13.80px;color:#9fb1c4;">target</div>
<div class="a" style="left:1353.3px;width:300px;text-align:right;top:1029.04px;font-size:12px;line-height:13.80px;color:#9fb1c4;">Total</div>
<div class="a" style="left:1308.5px;width:100px;text-align:center;top:1054.62px;font-size:11.7px;line-height:13.45px;color:#8ea3b5;">1</div>
<div class="a" style="left:1371.2px;top:1054.62px;font-size:11.7px;line-height:13.45px;color:#e8ecf1;">null/ADMINISTRATOR</div>
<div class="a" style="left:1353.3px;width:300px;text-align:right;top:1054.81px;font-size:11.5px;line-height:13.22px;color:#e8ecf1;font-family:'Liberation Mono',monospace;margin-top:0.2px">1,921</div>
<div class="a" style="left:1347px;top:1075px;width:315px;height:1px;background:#293a56;"></div></div></body></html>
